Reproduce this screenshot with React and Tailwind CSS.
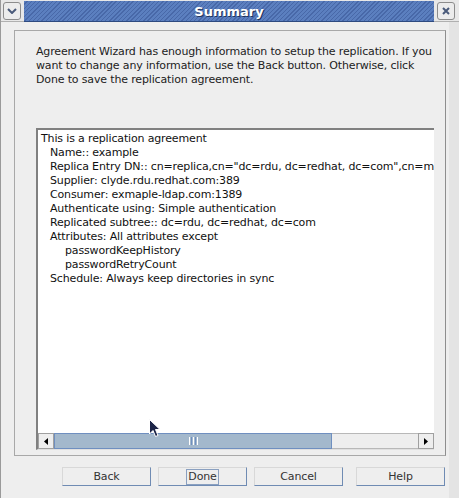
import React from "react";

const lines = [
  { t: "This is a replication agreement", i: 0 },
  { t: "Name:: example", i: 1 },
  { t: 'Replica Entry DN:: cn=replica,cn="dc=rdu, dc=redhat, dc=com",cn=mapping tree,cn=config', i: 1 },
  { t: "Supplier: clyde.rdu.redhat.com:389", i: 1 },
  { t: "Consumer: exmaple-ldap.com:1389", i: 1 },
  { t: "Authenticate using: Simple authentication", i: 1 },
  { t: "Replicated subtree:: dc=rdu, dc=redhat, dc=com", i: 1 },
  { t: "Attributes: All attributes except", i: 1 },
  { t: "passwordKeepHistory", i: 2 },
  { t: "passwordRetryCount", i: 2 },
  { t: "Schedule: Always keep directories in sync", i: 1 },
];

const indent = ["pl-[3px]", "pl-[12px]", "pl-[27px]"];

function WinButton({ children }) {
  return (
    <div className="w-[18px] h-[18px] rounded-[3px] border border-[#8c8c8c] bg-[#ececec] flex items-center justify-center">
      {children}
    </div>
  );
}

function DlgButton({ label, focus, className = "" }) {
  return (
    <button className={`shrink-0 w-[89px] h-[19px] bg-[#eeeeee] border border-[#d8d8d8] border-b-[#6f8bb3] border-r-[#6f8bb3] flex items-center justify-center text-[11px] tracking-[-0.15px] text-[#333] ${className}`}>
      <span className={focus ? "border border-[#8aa0c0] px-[1px] leading-[14px]" : "leading-[14px]"}>{label}</span>
    </button>
  );
}

export default function App() {
  return (
    <div
      className="relative w-[459px] h-[498px] overflow-hidden bg-[#eeeeee] border-l border-[#9a9a9a] flex flex-col"
      style={{ fontFamily: '"DejaVu Sans", sans-serif' }}
    >
      {/* title bar */}
      <div className="h-[22px] flex items-center bg-[#e8e8e8] border-b border-[#b0b0b0] pl-[2px] pr-[4px]">
        <WinButton>
          <svg width="10" height="6" viewBox="0 0 10 6">
            <path d="M1 1 L5 5 L9 1" stroke="#4a5a7a" strokeWidth="2" fill="none" />
          </svg>
        </WinButton>
        <div
          className="flex-1 h-[21px] mt-[1px] mx-[3px] flex items-center justify-center pt-[3px] border-b border-[#2e4a80]"
          style={{
            backgroundImage:
              "repeating-linear-gradient(135deg, #5b7fbf 0px, #5b7fbf 2px, #4868a8 2px, #4868a8 3px)",
          }}
        >
          <span className="text-white font-bold text-[13px] leading-[14px] [text-shadow:1px_1px_0_#20345c]">Summary</span>
        </div>
        <WinButton>
          <svg width="8" height="8" viewBox="0 0 8 8">
            <path d="M1 1 L7 7 M7 1 L1 7" stroke="#4a5a7a" strokeWidth="2" fill="none" />
          </svg>
        </WinButton>
      </div>

      {/* body */}
      <div className="flex-1 flex flex-col pl-[13px] pr-[3px] pt-[8px] border-r-[10px] border-[#e4e4e4]">
        <div className="h-[426px] border border-[#a8a8a8] border-r-[#8e8e8e] flex flex-col pl-[21px] pr-[11px] pt-[14px]">
          <p className="text-[11px] leading-[14px] tracking-[-0.15px] text-[#222] w-[400px]">
            Agreement Wizard has enough information to setup the replication. If you want to change any information, use the Back button. Otherwise, click Done to save the replication agreement.
          </p>
          <div className="mt-[41px] h-[322px] bg-white border-t-2 border-l-2 border-[#808080] border-b border-b-[#e0e0e0] flex flex-col">
            <div className="flex-1 overflow-hidden pt-[2px]">
              {lines.map((l, k) => (
                <div key={k} className={`${indent[l.i]} text-[11px] leading-[14px] tracking-[-0.15px] text-[#111] whitespace-nowrap`}>
                  {l.t}
                </div>
              ))}
            </div>
            {/* horizontal scrollbar */}
            <div className="h-[16px] flex bg-[#eeeeee]">
              <div className="w-[16px] h-[16px] border border-[#a0a0a0] bg-[#eeeeee] flex items-center justify-center">
                <svg width="4" height="7" viewBox="0 0 4 7"><path d="M4 0 L0 3.5 L4 7 Z" fill="#000" /></svg>
              </div>
              <div className="w-[278px] h-[16px] bg-[#a3b8cc] border border-[#6f8fc0] flex items-center justify-center">
                <div className="flex gap-[1px]">
                  <div className="w-[1px] h-[8px] bg-white" />
                  <div className="w-[1px] h-[8px] bg-[#6f8fc0]" />
                  <div className="w-[1px] h-[8px] bg-white" />
                  <div className="w-[1px] h-[8px] bg-[#6f8fc0]" />
                  <div className="w-[1px] h-[8px] bg-white" />
                </div>
              </div>
              <div className="flex-1 h-[16px] border-t border-b border-[#b8b8b8] bg-[#eeeeee]" />
              <div className="w-[16px] h-[16px] border border-[#a0a0a0] bg-[#eeeeee] flex items-center justify-center">
                <svg width="4" height="7" viewBox="0 0 4 7"><path d="M0 0 L4 3.5 L0 7 Z" fill="#000" /></svg>
              </div>
            </div>
          </div>
        </div>

        {/* buttons */}
        <div className="mt-[11px] flex">
          <DlgButton label="Back" className="ml-[48px]" />
          <DlgButton label="Done" focus className="ml-[7px]" />
          <DlgButton label="Cancel" className="ml-[7px]" />
          <DlgButton label="Help" className="ml-[13px]" />
        </div>
      </div>

      {/* mouse cursor */}
      <svg className="absolute left-[148px] top-[419px]" width="12" height="19" viewBox="0 0 12 19">
        <path d="M0.5 0.5 L0.5 15 L4 11.5 L6.5 17.5 L9 16.5 L6.5 10.5 L11 10.5 Z" fill="#1c2447" stroke="#ffffff" strokeWidth="1" />
      </svg>
    </div>
  );
}
